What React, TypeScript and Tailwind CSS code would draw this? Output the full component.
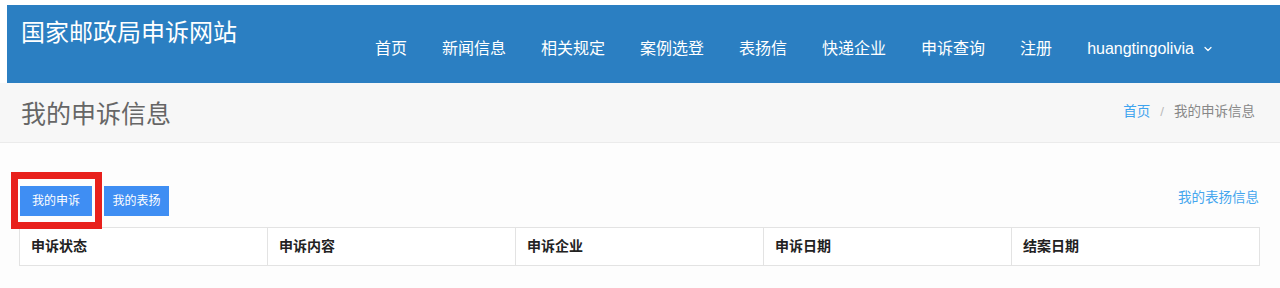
import { ChevronDown } from "lucide-react";

const navItems = ["首页", "新闻信息", "相关规定", "案例选登", "表扬信", "快递企业", "申诉查询", "注册"];
const columns = ["申诉状态", "申诉内容", "申诉企业", "申诉日期", "结案日期"];

export default function App() {
  return (
    <div className="w-[1280px] h-[288px] overflow-hidden bg-[#fdfdfd] font-['Liberation_Sans','Noto_Sans_CJK_SC',sans-serif]">
      {/* top bar */}
      <div className="pt-[5px] pl-[7px] bg-white">
        <header className="h-[78px] bg-[#2b7fc2] flex items-start pl-[14px]">
          <div className="w-[354px] mt-[13px] text-[24px] leading-[30px] text-white">国家邮政局申诉网站</div>
          <nav className="flex items-center gap-[35px] mt-[32px] text-[16px] leading-[24px] text-white">
            {navItems.map((item) => (
              <span key={item}>{item}</span>
            ))}
            <span className="flex items-center gap-[8px]">
              huangtingolivia
              <ChevronDown size={12} strokeWidth={2.5} />
            </span>
          </nav>
        </header>
      </div>

      {/* page header */}
      <div className="h-[60px] bg-[#f7f7f7] border-b border-[#ebebeb] flex items-center justify-between pl-[21px] pr-[25px]">
        <h1 className="text-[25px] leading-[32px] text-[#666] mt-[2px]">我的申诉信息</h1>
        <div className="flex items-center text-[13.5px] leading-[18px] -mt-[2px]">
          <span className="text-[#3ea4ef]">首页</span>
          <span className="text-[#bbb] px-[10px]">/</span>
          <span className="text-[#888]">我的申诉信息</span>
        </div>
      </div>

      {/* content */}
      <div className="relative pl-[19px] pr-[20px] pt-[43px]">
        <div className="flex items-start justify-between">
          <div className="flex items-center gap-[12px] pl-[1px]">
            <button className="w-[72px] h-[30px] bg-[#3f8ef3] text-white text-[12px] leading-[30px]">我的申诉</button>
            <button className="w-[65px] h-[30px] bg-[#3f8ef3] text-white text-[12px] leading-[30px]">我的表扬</button>
          </div>
          <a className="mt-[4px] mr-[1px] text-[13.5px] leading-[16px] text-[#45a6ee]">我的表扬信息</a>
        </div>

        <table className="mt-[11px] w-[1241px] border-collapse table-fixed">
          <thead>
            <tr className="h-[38px]">
              {columns.map((c) => (
                <th key={c} className="border border-[#e3e3e3] px-[11px] text-left text-[14px] font-bold text-[#222] bg-white">
                  {c}
                </th>
              ))}
            </tr>
          </thead>
        </table>

        {/* annotation box */}
        <div className="absolute left-[11px] top-[29px] w-[91px] h-[57px] border-[7px] border-[#e8201c]" />
      </div>
    </div>
  );
}
